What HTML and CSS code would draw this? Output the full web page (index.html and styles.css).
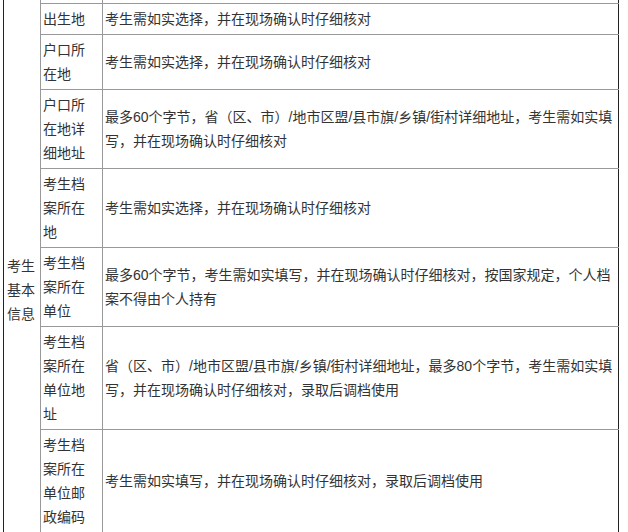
FILE: index.html
```html
<!DOCTYPE html>
<html lang="zh-CN">
<head>
<meta charset="utf-8">
<title>考生基本信息</title>
<link rel="stylesheet" href="styles.css">
</head>
<body>
<div class="page">
<table class="info">
<colgroup><col class="c1"><col class="c2"><col class="c3"></colgroup>
<tbody>
<tr class="cut"><td class="group" rowspan="8">考生基本信息</td><td class="field"></td><td class="desc"></td></tr>
<tr><td class="field">出生地</td><td class="desc">考生需如实选择，并在现场确认时仔细核对</td></tr>
<tr><td class="field">户口所在地</td><td class="desc">考生需如实选择，并在现场确认时仔细核对</td></tr>
<tr><td class="field">户口所在地详细地址</td><td class="desc">最多60个字节，省（区、市）/地市区盟/县市旗/乡镇/街村详细地址，考生需如实填写，并在现场确认时仔细核对</td></tr>
<tr><td class="field">考生档案所在地</td><td class="desc">考生需如实选择，并在现场确认时仔细核对</td></tr>
<tr><td class="field">考生档案所在单位</td><td class="desc">最多60个字节，考生需如实填写，并在现场确认时仔细核对，按国家规定，个人档案不得由个人持有</td></tr>
<tr><td class="field">考生档案所在单位地址</td><td class="desc">省（区、市）/地市区盟/县市旗/乡镇/街村详细地址，最多80个字节，考生需如实填写，并在现场确认时仔细核对，录取后调档使用</td></tr>
<tr><td class="field">考生档案所在单位邮政编码</td><td class="desc">考生需如实填写，并在现场确认时仔细核对，录取后调档使用</td></tr>
</tbody>
</table>
</div>
</body>
</html>
```
FILE: styles.css
```css
html, body {
  margin: 0;
  padding: 0;
  background: #fff;
}
body {
  overflow: hidden;
  font-family: "Liberation Sans", "Noto Sans CJK SC", sans-serif;
  font-size: 14px;
  line-height: 24px;
  color: #333;
}
.page {
  padding-left: 3px;
  margin-top: -27px;
}
.info {
  border-collapse: collapse;
  table-layout: fixed;
  width: 615px;
}
.c1 { width: 37px; }
.c2 { width: 62px; }
.c3 { width: 516px; }
.info td {
  border: 1px solid #999;
  padding: 3px 2px;
  vertical-align: middle;
  word-break: break-all;
}
.cut { height: 30px; }
.info td.group {
  border-left: 1px solid #222;
  vertical-align: top;
  padding: 280px 2px 0 3px;
}
.info td.field {
  padding: 3px 4px 3px 2px;
}
.info td.desc {
  border-right: 1px solid #222;
  padding: 3px 1px 3px 2px;
}
```
